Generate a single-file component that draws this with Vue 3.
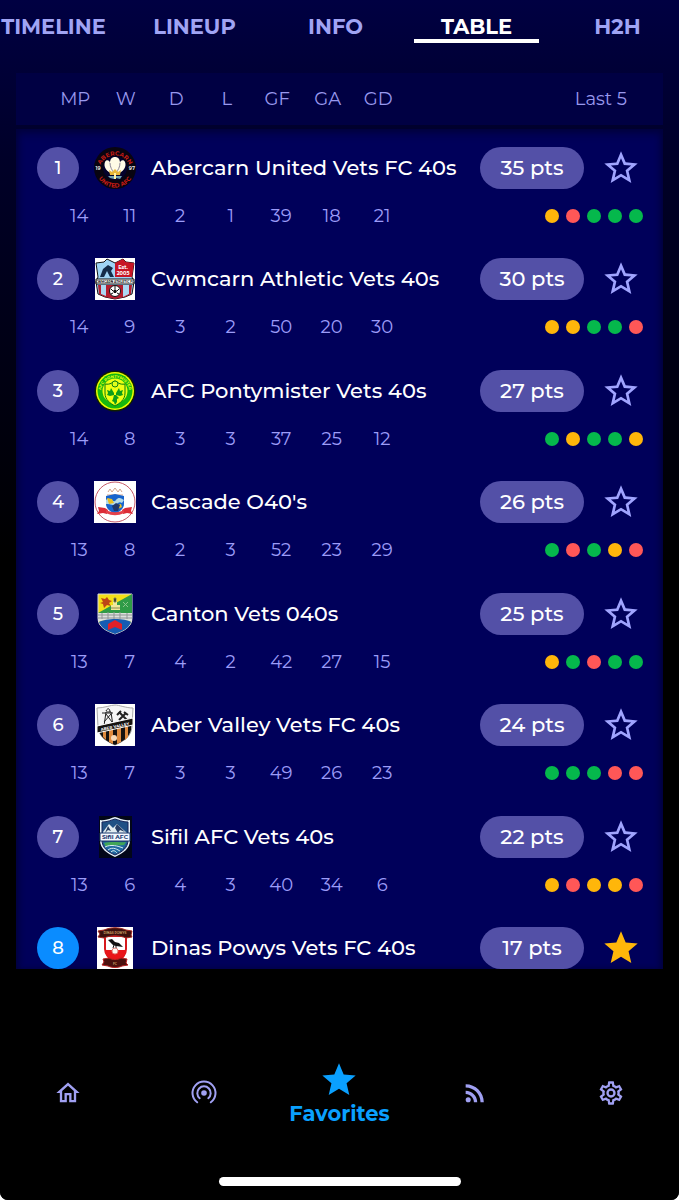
<template>
  <div class="app">
    <nav class="tabs">
      <button
        v-for="tab in tabs"
        :key="tab"
        class="tab"
        :class="{ active: activeTab === tab }"
        @click="activeTab = tab"
      >
        {{ tab }}
      </button>
    </nav>

    <table class="standings">
      <thead>
        <tr class="head-row">
          <th v-for="col in columns" :key="col" scope="col">{{ col }}</th>
          <th class="last-five" scope="col">Last 5</th>
        </tr>
      </thead>
      <tbody>
        <tr v-for="(team, index) in teams" :key="team.name" class="team-row">
          <th class="team" scope="row">
            <span class="rank" :class="{ own: team.favorite }">{{ index + 1 }}</span>

            <!-- Club crests -->
            <svg class="crest" viewBox="0 0 42 42" aria-hidden="true">
              <g v-if="team.crest === 'abercarn'">
                <circle cx="21" cy="21" r="21" fill="#080410" />
                <circle cx="21" cy="21" r="12" fill="#04022c" />
                <path id="ringTop" d="M5.500 24A15.500 15.500 0 1 1 36.500 24" fill="none" />
                <path id="ringBottom" d="M1.500 21A19.500 19.500 0 0 0 40.500 21" fill="none" />
                <text class="ring"><textPath href="#ringTop" startOffset="50%">ABERCARN</textPath></text>
                <text class="ring"><textPath href="#ringBottom" startOffset="50%">UNITED AFC</textPath></text>
                <text x="4" y="23" class="year">19</text>
                <text x="38" y="23" class="year">97</text>
                <path d="M19 27C13 25 9 20 11 15c1-3 5-2 5 1 0-4 2-6 5-6s5 2 5 6c0-3 4-4 5-1 2 5-2 10-8 12z" fill="#fffbe6" />
                <path d="M16 16c0 4 2 7 4 10M26 16c0 4-2 7-4 10" stroke="#8d8797" fill="none" />
                <path d="M15 23l3 2 3-3 3 3 3-2-1 5H16z" fill="#e8b738" />
                <path d="M14 29h14l-2 3-4-1-2 1-4-1z" fill="#6fa3b4" />
                <path d="M20 26h2v6h-2z" fill="#fff1a6" />
              </g>

              <g v-else-if="team.crest === 'cwmcarn'">
                <path d="M1 0h40v42H1z" fill="#fff" />
                <path d="M2 5l8-1 3-3 8 4 8-4 3 3 8 1-2 14 2 5-2 12-7 3-10 2-10-2-7-3-2-12 2-5z" fill="#9ed4f5" stroke="#111" />
                <path d="M21 5l8-4 3 3 8 1-2 14H21z" fill="#c71625" />
                <path d="M4 27h34l-1 9-6 3-10 2-10-2-6-3z" fill="#b51c2e" />
                <path d="M7 27h5v11l-5-2zM29 27h6v9l-6 3z" fill="#acd8f3" />
                <path d="M6 19l3-8 5-4 5 3-2 3 3 6h-4l-3-6-3 6z" fill="#142c4a" />
                <path d="M2 21h38v5H2z" fill="#fff" stroke="#111" />
                <text x="21" y="25" class="banner small" fill="#111">CWMCARN ATHLETIC FC</text>
                <text x="29" y="11" class="est">Est.</text>
                <text x="29" y="17" class="est">2005</text>
                <circle cx="21" cy="33" r="5.500" fill="#fff" stroke="#111" />
                <path d="M21 31l2 2-1 2h-2l-1-2z" fill="#111" />
                <path d="M17 36l2-1M25 36l-2-1M21 28v3M17 31l2 2M25 31l-2 2" stroke="#111" />
              </g>

              <g v-else-if="team.crest === 'pontymister'">
                <circle cx="21" cy="21" r="20.500" fill="#101f00" />
                <circle cx="21" cy="21" r="19" fill="#ecff00" />
                <circle cx="21" cy="21" r="17.500" fill="#16b80f" />
                <circle cx="21" cy="21" r="12.500" fill="#efff12" />
                <path id="pontyTop" d="M7 22A14 14 0 0 1 35 22" fill="none" />
                <text class="ponty"><textPath href="#pontyTop" startOffset="50%">AFC PONTYMISTER</textPath></text>
                <path d="M11 14c6 1 7-2 10-3 3 1 4 4 10 3v9c0 7-5 10-10 13-5-3-10-6-10-13z" fill="#efff12" stroke="#087b10" />
                <circle cx="21" cy="14" r="3" fill="#dfff1c" stroke="#128216" />
                <path d="M20 23l-3-5-1 3-3-1 1 3-1 2 3 1 4-1zM22 23l3-5 1 3 3-1-1 3 1 2-3 1-4-1zM20 25h2l3 3-2 1v3l-2 3-1-3-2-1 1-2z" fill="#0c9d19" />
              </g>

              <g v-else-if="team.crest === 'cascade'">
                <path d="M0 0h42v42H0z" fill="#fff" />
                <circle cx="21" cy="21" r="20" fill="#fff" stroke="#c65b68" />
                <path d="M14 11l2-3 2 3 3-4 3 4 2-3 2 3M13 14h16" stroke="#d2a48a" fill="none" />
                <path d="M12 15l9-2 9 2v8c0 5-5 8-9 10-4-2-9-5-9-10z" fill="#1764cd" />
                <path d="M12 19c4-4 7 4 10 0s6-1 8 0l-2 3c-4-3-5 3-9 2s-5-1-7-1z" fill="#b6dae7" />
                <path d="M13 17l5 1 2 4-5 1zM22 24l5-1 1 3-4 2z" fill="#e8bd22" />
                <path d="M18 25l4-3 4 2-2 6h-4z" fill="#20366b" />
                <path d="M4 26l7 1 3 2-1 4-4-1-6 1 2-3zM38 26l-7 1-3 2 1 4 4-1 6 1-2-3z" fill="#dc2d37" />
                <path d="M12 29c6 3 12 3 18 0v3c-6 3-12 3-18 0z" fill="#e5414a" />
              </g>

              <g v-else-if="team.crest === 'canton'">
                <path d="M4 1h34v24c0 9-8 13-17 16C12 38 4 34 4 25z" fill="#f4df17" stroke="#d5d9df" />
                <path d="M38 1v22H4v-3z" fill="#2f9b47" />
                <path d="M7 5l4 1 2-2 2 3 3 1-3 2 2 3-4-1-3 3-1-4-3-1 3-1z" fill="#bd4516" />
                <path d="M17 17v-5h2v-5h4v5h3v5z" fill="#eee99c" />
                <path d="M20 5h2v4h-2zM17 15h9" stroke="#8c8c55" />
                <path d="M29 9l5 5M34 9l-5 5" stroke="#8cc48c" />
                <path d="M4 20h34v9c-6-3-28-3-34 0z" fill="#dce0dd" />
                <path d="M4 22h34M4 25h34M8 20v6M14 19v7M20 19v7M26 19v7M33 20v6" stroke="#909496" fill="none" />
                <path d="M5 29c7-4 26-4 32 0-2 6-8 9-16 12-8-3-14-6-16-12z" fill="#155bb3" />
                <path d="M14 31l7-4 7 4v6l-7-3-7 3z" fill="#e12027" />
              </g>

              <g v-else-if="team.crest === 'abervalley'">
                <path d="M1 0h40v42H1z" fill="#fff" />
                <path d="M3 4c7 0 14-3 18-3s11 3 18 3l-1 19c-1 10-8 14-17 18C12 37 5 33 4 23z" fill="#f5f5f5" stroke="#aaa" />
                <path d="M4 23l34-9-1 12c-2 8-9 12-16 15C13 38 5 33 4 23z" fill="#17120f" />
                <path d="M9 25h3v11l-3-3zM15 24h4v16l-4-2zM23 22h4v16l-4 2zM31 20h3v13l-3 3z" fill="#df8a3d" />
                <path d="M10 22l2-14h5l2 14M10 18l7-8M18 18l-6-8M8 9h11M12 7c2-4 4-2 4 1" stroke="#222" fill="none" />
                <path d="M25 8l8 8M32 9l-7 7" stroke="#222" stroke-width="2" fill="none" />
                <path d="M23 11l4-4M30 8l4 3" stroke="#222" stroke-width="2" />
                <path d="M3 22l36-8v7L3 29z" fill="#17130f" stroke="#fff" />
                <text x="21" y="24" class="banner" fill="#fff" transform="rotate(-12 21 23)">ABER VALLEY</text>
                <circle cx="20" cy="34" r="3" fill="#f7dab9" />
              </g>

              <g v-else-if="team.crest === 'sifil'">
                <path d="M5 0h33v42H5z" fill="#020618" />
                <path d="M6 4c6 1 11-2 15-3 4 1 9 4 15 3v20c0 9-7 13-15 17C13 37 6 33 6 24z" fill="#e8f3fa" />
                <path d="M8 6c6 0 9-2 13-3 4 1 7 3 13 3v18c0 8-6 12-13 15-7-3-13-7-13-15z" fill="#205185" stroke="#17255a" />
                <path d="M9 16l6-8 4 4 4-4 10 9v3H9z" fill="#e3edf1" />
                <path d="M14 10l3 5-3-1-3 3zM23 8l8 8-5-2-2 3-3-5z" fill="#273e64" />
                <path d="M6 17h30v8H6z" fill="#f6f9ff" stroke="#17366d" />
                <text x="21" y="23" class="sifil">Sifil AFC</text>
                <path d="M9 26h24c-3 8-7 9-12 12-7-3-11-6-12-12z" fill="#2069a1" />
                <path d="M10 27c9-2 14 0 22-1l-2 3c-9 1-15-1-18 2z" fill="#42a657" />
                <path d="M11 31c6-3 13-1 18 1M14 34c5-4 10 0 12 1M17 36c3-3 5 0 6 1" stroke="#d8ecf2" fill="none" />
              </g>

              <g v-else>
                <path d="M3 0h36v42H3z" fill="#fff" />
                <path d="M11 9h21v13c0 6-4 9-10 14-7-5-11-8-11-14z" fill="#fff" stroke="#d7191d" stroke-width="2" />
                <path d="M11 23h21c0 6-4 9-10 13-7-4-11-7-11-13z" fill="#e91519" />
                <path d="M4 4l6-1c7-3 15-3 22 0l6 1-1 4 1 2-6 1c-7-3-15-3-22 0l-6-1 2-3z" fill="#3b100c" stroke="#a52722" />
                <text x="21" y="7" class="dinas">DINAS POWYS</text>
                <path d="M14 13l4-1 3 3 4 1 4 4-7-1-3-1-3-3z" fill="#111" />
                <path d="M20 18l-1 3M22 18v3" stroke="#111" />
                <circle cx="21" cy="24" r="3" fill="#fff4ed" stroke="#dc817c" />
                <path d="M9 32l6-1c4 2 8 2 12 0l6 1-1 4 2 2-6 1c-4 2-10 2-14 0l-6-1 2-3z" fill="#4b110e" stroke="#b91f1f" />
                <text x="21" y="38" class="dinas">FC</text>
              </g>
            </svg>

            <span class="name">{{ team.name }}</span>
            <span class="points">{{ team.points }} pts</span>
            <button
              class="star"
              :class="{ filled: team.favorite }"
              :aria-label="'Favorite ' + team.name"
              @click="team.favorite = !team.favorite"
            >
              <svg viewBox="0 0 24 24" aria-hidden="true">
                <path :d="team.favorite ? icons.star : icons.starOutline" />
              </svg>
            </button>
          </th>
          <td v-for="(stat, i) in team.stats" :key="i" class="stat" :class="{ first: i === 0 }">
            {{ stat }}
          </td>
          <td v-if="team.form" class="form">
            <span v-for="(result, i) in team.form" :key="i" class="dot" :class="result"></span>
          </td>
        </tr>
      </tbody>
    </table>

    <footer class="bottom">
      <nav class="menu">
        <a href="#" aria-label="Home">
          <svg viewBox="0 0 24 24"><path :d="icons.home" /></svg>
        </a>
        <a href="#" aria-label="Live">
          <svg class="live" viewBox="0 0 28 28">
            <circle cx="14" cy="14" r="2.800" />
            <path d="M9.700 19.200A6.700 6.700 0 1 1 18.300 19.200M7.200 23.300A11.500 11.500 0 1 1 20.800 23.300" />
          </svg>
        </a>
        <a href="#" class="current">
          <svg viewBox="0 0 24 24"><path :d="icons.star" /></svg>
          <span>Favorites</span>
        </a>
        <a href="#" aria-label="News">
          <svg viewBox="0 0 24 24"><path :d="icons.rss" /></svg>
        </a>
        <a href="#" aria-label="Settings">
          <svg viewBox="0 0 24 24"><path :d="icons.cog" /></svg>
        </a>
      </nav>
      <div class="home-indicator"></div>
    </footer>
  </div>
</template>

<script setup>
import { ref } from "vue";

const tabs = ["TIMELINE", "LINEUP", "INFO", "TABLE", "H2H"];
const activeTab = ref("TABLE");

const columns = ["MP", "W", "D", "L", "GF", "GA", "GD"];

// Results in the form guide: w = win, d = draw, l = loss
const teams = ref([
  { name: "Abercarn United Vets FC 40s", crest: "abercarn", points: 35, stats: [14, 11, 2, 1, 39, 18, 21], form: ["d", "l", "w", "w", "w"] },
  { name: "Cwmcarn Athletic Vets 40s", crest: "cwmcarn", points: 30, stats: [14, 9, 3, 2, 50, 20, 30], form: ["d", "d", "w", "w", "l"] },
  { name: "AFC Pontymister Vets 40s", crest: "pontymister", points: 27, stats: [14, 8, 3, 3, 37, 25, 12], form: ["w", "d", "w", "w", "d"] },
  { name: "Cascade O40's", crest: "cascade", points: 26, stats: [13, 8, 2, 3, 52, 23, 29], form: ["w", "l", "w", "d", "l"] },
  { name: "Canton Vets 040s", crest: "canton", points: 25, stats: [13, 7, 4, 2, 42, 27, 15], form: ["d", "w", "l", "w", "w"] },
  { name: "Aber Valley Vets FC 40s", crest: "abervalley", points: 24, stats: [13, 7, 3, 3, 49, 26, 23], form: ["w", "w", "w", "l", "l"] },
  { name: "Sifil AFC Vets 40s", crest: "sifil", points: 22, stats: [13, 6, 4, 3, 40, 34, 6], form: ["d", "l", "d", "d", "l"] },
  { name: "Dinas Powys Vets FC 40s", crest: "dinas", points: 17, favorite: true }
]);

const icons = {
  star: "M12 17.27L18.18 21l-1.64-7.03L22 9.24l-7.19-.61L12 2 9.19 8.63 2 9.24l5.46 4.73L5.82 21z",
  starOutline: "M22 9.24l-7.19-.62L12 2 9.19 8.63 2 9.24l5.46 4.73L5.82 21 12 17.27 18.18 21l-1.63-7.03L22 9.24zM12 15.4l-3.76 2.27 1-4.28-3.32-2.88 4.38-.38L12 6.1l1.71 4.04 4.38.38-3.32 2.88 1 4.28L12 15.4z",
  home: "M12 5.69l5 4.5V18h-2v-6H9v6H7v-7.81l5-4.5M12 3L2 12h3v8h6v-6h2v6h6v-8h3L12 3z",
  rss: "M4 17.82a2.18 2.18 0 1 0 4.36 0a2.18 2.18 0 1 0-4.36 0zM4 4.44v2.83c7.03 0 12.73 5.7 12.73 12.73h2.83c0-8.59-6.97-15.56-15.56-15.56zm0 5.66v2.83c3.9 0 7.07 3.17 7.07 7.07h2.83c0-5.47-4.43-9.9-9.9-9.9z",
  cog: "M12 8a4 4 0 0 1 4 4 4 4 0 0 1-4 4 4 4 0 0 1-4-4 4 4 0 0 1 4-4m0 2a2 2 0 0 0-2 2 2 2 0 0 0 2 2 2 2 0 0 0 2-2 2 2 0 0 0-2-2m-2 12c-.25 0-.46-.18-.5-.42l-.37-2.65c-.63-.25-1.17-.59-1.69-.99l-2.49 1.01c-.22.08-.49 0-.61-.22l-2-3.46c-.13-.22-.07-.49.12-.64l2.11-1.66L4.5 12l.07-1-2.11-1.63c-.19-.15-.25-.42-.12-.64l2-3.46c.12-.22.39-.31.61-.22l2.49 1c.52-.39 1.06-.73 1.69-.98l.37-2.65c.04-.24.25-.42.5-.42h4c.25 0 .46.18.5.42l.37 2.65c.63.25 1.17.59 1.69.98l2.49-1c.22-.09.49 0 .61.22l2 3.46c.13.22.07.49-.12.64L19.43 11l.07 1-.07 1 2.11 1.63c.19.15.25.42.12.64l-2 3.46c-.12.22-.39.31-.61.22l-2.49-1c-.52.39-1.06.73-1.69.98l-.37 2.65c-.04.24-.25.42-.5.42h-4m1.25-18l-.37 2.61c-1.2.25-2.26.89-3.03 1.78L5.44 7.35l-.75 1.3L6.8 10.2a5.55 5.55 0 0 0 0 3.6l-2.12 1.56.75 1.3 2.43-1.04c.77.88 1.82 1.52 3.01 1.76l.37 2.62h1.52l.37-2.61c1.19-.25 2.24-.89 3.01-1.77l2.43 1.04.75-1.3-2.12-1.55c.4-1.17.4-2.44 0-3.61l2.11-1.55-.75-1.3-2.41 1.04a5.42 5.42 0 0 0-3.03-1.77L12.75 4h-1.5z"
};
</script>

<style>
body {
  background: #fff;
}
</style>

<style scoped>
.app {
  display: flex;
  flex-direction: column;
  height: 100vh;
  overflow: hidden;
  border-radius: 0 0 8px 8px;
  background: linear-gradient(#000042, #000028 160px, #000010 400px, #000 560px);
  color: #fff;
  font-family: Montserrat, Inter, sans-serif;
}

button {
  border: none;
  background: none;
  padding: 0;
  font: inherit;
  color: inherit;
  cursor: pointer;
}

/* Tabs, the strip runs slightly past both screen edges */
.tabs {
  display: flex;
  flex: none;
  margin: 0 -9px 0 -17px;
}

.tab {
  flex: 1;
  margin: 0 8px;
  padding-top: 15px;
  border-bottom: 4px solid transparent;
  font-size: 21px;
  font-weight: 700;
  line-height: 24px;
  color: #a0a4f4;
}

.tab.active {
  color: #fff;
  border-color: #fff;
}

/* Standings */
.standings {
  display: flex;
  flex: 1;
  flex-direction: column;
  min-height: 0;
  margin: 30px 16px 0;
}

thead {
  display: block;
  background: #000043;
}

.head-row {
  display: grid;
  grid-template-columns: 13px repeat(7, 3fr) 14fr;
  padding: 14px 24px 14px 21px;
}

.head-row th {
  padding: 0;
  font-size: 18px;
  font-weight: 400;
  line-height: 24px;
  text-align: center;
  color: #9898ee;
}

.head-row th:first-child {
  grid-column: 2;
}

.head-row .last-five {
  padding-right: 12px;
  text-align: right;
}

tbody {
  display: flex;
  flex: 1;
  flex-direction: column;
  justify-content: space-between;
  min-height: 0;
  margin-top: 4px;
  padding: 18px 20px 0 21px;
  overflow: hidden;
  background: #00005a;
  box-shadow: inset 0 4px 8px #00003c, inset 4px 0 6px -3px #00003c, inset -4px 0 6px -3px #00003c;
}

.team-row {
  display: grid;
  grid-template-columns: 17px repeat(7, 3fr) 14fr;
  row-gap: 15px;
}

.team {
  display: flex;
  grid-column: 1 / -1;
  align-items: center;
  gap: 15px;
  padding: 0;
  font-weight: 500;
  text-align: left;
}

.rank {
  flex: none;
  width: 42px;
  border-radius: 50%;
  background: #5350a7;
  font-size: 18px;
  line-height: 42px;
  text-align: center;
}

.rank.own {
  background: #0a8cff;
}

.crest {
  flex: none;
  width: 42px;
  height: 42px;
}

.crest text {
  font-weight: 700;
  text-anchor: middle;
}

.ring {
  font-size: 6px;
  fill: #c81c14;
}

.year {
  font-size: 5px;
  fill: #ddd;
}

.banner {
  font-size: 4px;
}

.banner.small {
  font-size: 3px;
}

.est {
  font-size: 5px;
  fill: #fff;
}

.ponty {
  font-size: 4px;
  fill: #e5ff16;
}

.sifil {
  font-size: 6px;
  fill: #17366d;
}

.dinas {
  font-size: 3px;
  fill: #c49a61;
}

.name {
  flex: 1;
  font-size: 21px;
  line-height: 28px;
  white-space: nowrap;
}

.points {
  flex: none;
  width: 104px;
  border-radius: 21px;
  background: #5350a7;
  font-size: 21px;
  line-height: 42px;
  text-align: center;
}

.star {
  display: flex;
  flex: none;
  justify-content: center;
  width: 44px;
  fill: #a0a4ff;
}

.star.filled {
  fill: #ffb70a;
}

.star svg {
  width: 40px;
  height: 40px;
}

.stat {
  padding: 0;
  font-size: 18px;
  line-height: 24px;
  text-align: center;
  color: #9c9cf8;
}

.stat.first {
  grid-column: 2;
}

.form {
  display: flex;
  align-items: center;
  justify-content: flex-end;
  gap: 7px;
  padding: 0;
}

.dot {
  width: 14px;
  height: 14px;
  border-radius: 50%;
}

.dot.w {
  background: #05b84c;
}

.dot.d {
  background: #ffb60a;
}

.dot.l {
  background: #ff5757;
}

/* Bottom navigation */
.bottom {
  display: flex;
  flex: none;
  flex-direction: column;
  align-items: center;
  padding: 89px 0 14px;
  background: #000;
}

.menu {
  display: flex;
  width: 100%;
  height: 70px;
}

.menu a {
  display: flex;
  flex: 1;
  flex-direction: column;
  align-items: center;
  justify-content: center;
  color: #a0a0f2;
  fill: currentColor;
  text-decoration: none;
}

.menu svg {
  width: 28px;
  height: 28px;
}

.menu .live path {
  fill: none;
  stroke: currentColor;
  stroke-width: 2px;
  stroke-linecap: round;
}

.menu .current {
  justify-content: flex-end;
  color: #0aa0ff;
  font-size: 21px;
  font-weight: 700;
  line-height: 28px;
}

.menu .current svg {
  width: 40px;
  height: 40px;
}

.home-indicator {
  width: 242px;
  height: 9px;
  margin-top: 49px;
  border-radius: 5px;
  background: #fff;
}
</style>
